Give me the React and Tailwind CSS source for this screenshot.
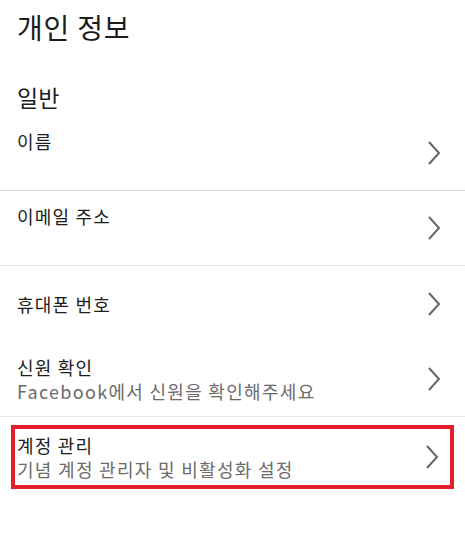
const font = { fontFamily: '"Noto Sans CJK KR", "Noto Sans", sans-serif' };

const Chevron = () => (
  <svg width="14" height="26" viewBox="0 0 14 26" className="shrink-0">
    <path d="M2 2 L12 13 L2 24" fill="none" stroke="#666" strokeWidth="2" />
  </svg>
);

const Row = ({ title, sub, reserve }) => (
  <div className="flex items-center justify-between">
    <div className="flex flex-col">
      <span className="text-[18px] leading-[24px] tracking-[1.2px] text-[#1c1c1c]">{title}</span>
      {sub && <span className="text-[18px] leading-[24px] tracking-[1.3px] text-[#6b6b6b]">{sub}</span>}
      {reserve && <span className="h-[24px]" />}
    </div>
    <Chevron />
  </div>
);

export default function App() {
  return (
    <div className="w-[465px] h-[551px] bg-white" style={font}>
      <h1 className="px-[17px] pt-[9px] text-[28px] leading-[36px] tracking-[0.8px] text-[#1c1c1c]">개인 정보</h1>
      <h2 className="px-[17px] mt-[37px] text-[23px] leading-[30px] text-[#1c1c1c]">일반</h2>

      <div className="mt-[4px] pl-[17px] pr-[24px] py-[13px]">
        <Row title="이름" reserve />
      </div>
      <div className="h-px bg-[#dcdcdc]" />
      <div className="pl-[17px] pr-[24px] py-[13px]">
        <Row title="이메일 주소" reserve />
      </div>
      <div className="h-px bg-[#e6e6e6]" />
      <div className="pl-[17px] pr-[24px] py-[25px]">
        <Row title="휴대폰 번호" />
      </div>
      <div className="pl-[17px] pr-[24px] py-[13px]">
        <Row title="신원 확인" sub="Facebook에서 신원을 확인해주세요" />
      </div>
      <div className="h-px bg-[#e6e6e6]" />
      <div className="mx-[11px] mt-[8px] border-4 border-[#e31e2a] pl-[2px] pr-[11px] py-[4px]">
        <Row title="계정 관리" sub="기념 계정 관리자 및 비활성화 설정" />
      </div>
    </div>
  );
}
